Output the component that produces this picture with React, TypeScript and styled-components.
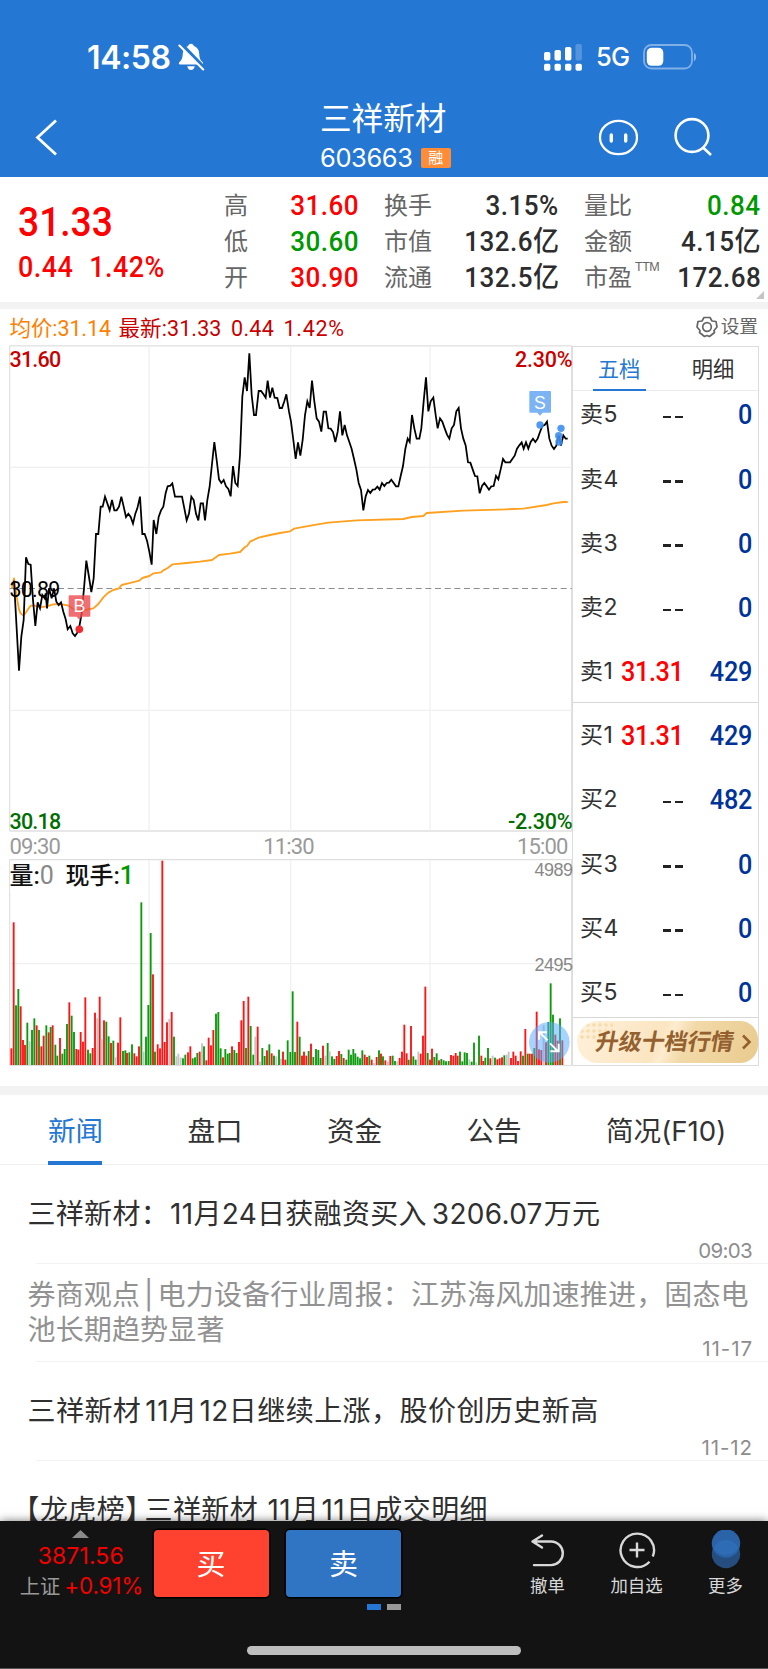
import React from 'react';
import styled, { createGlobalStyle } from 'styled-components';

const ui = `Inter, 'Noto Sans CJK SC', sans-serif`;
const din = `Roboto, 'Noto Sans CJK SC', sans-serif`;

const Global = createGlobalStyle`
  * { box-sizing: border-box; }
  body { margin: 0; background: #fff; font-family: ${ui}; color: #333; }
  svg { display: block; flex: none; }
`;

const Screen = styled.div`
  width: 768px; height: 1669px; overflow: hidden;
  display: flex; flex-direction: column; background: #fff; white-space: nowrap;
`;

/* ---------- header ---------- */
const Header = styled.header`
  height: 177px; flex: none; background: #2577d4; color: #fff;
  display: flex; flex-direction: column;
`;
const StatusBar = styled.div`
  height: 95px; padding: 38px 71px 0 87px; display: flex; justify-content: space-between; align-items: flex-start;
`;
const StatusSide = styled.div<{ $gap: number }>`
  display: flex; align-items: center; height: 38px; gap: ${p => p.$gap}px;
`;
const Clock = styled.span`font-size: 32px; font-weight: 600; line-height: 39px; letter-spacing: -0.4px; width: 84px;`;
const Network = styled.span`font-size: 25.5px; font-weight: 500; line-height: 40px; letter-spacing: -0.7px; width: 33px;`;
const NavBar = styled.div`
  flex: 1; display: grid; grid-template-columns: 320px 1fr auto; padding-right: 56px; align-items: start;
`;
const BackSlot = styled.div`padding: 24px 0 0 35px;`;
const TitleBlock = styled.div`display: flex; flex-direction: column; padding-top: 3px;`;
const Title = styled.h1`margin: 0; font-size: 31.6px; font-weight: 400; line-height: 42px;`;
const CodeLine = styled.div`display: flex; align-items: center; gap: 8px; line-height: 35px; height: 35px; font-size: 25.5px; letter-spacing: -0.4px;`;
const MarginBadge = styled.span`
  width: 30px; height: 20px; line-height: 20px; border-radius: 2px; background: #ff8c37;
  font-size: 15px; letter-spacing: 0; text-align: center;
`;
const NavIcons = styled.div`display: flex; gap: 35px; padding-top: 21px;`;

/* ---------- quote summary ---------- */
const Quote = styled.section`
  position: relative; height: 125px; flex: none; display: flex; padding: 10px 9px 0 18px; font-family: ${din};
`;
const PriceBlock = styled.div`width: 206px; color: #f00; font-weight: 500;`;
const LastPrice = styled.div`
  font-size: 40px; line-height: 44px; margin-top: 14px; letter-spacing: 0; transform: scaleX(0.93); transform-origin: left;
`;
const Change = styled.div`
  font-size: 29px; line-height: 40px; margin-top: 2px; display: flex; gap: 17px; letter-spacing: 0.5px;
  transform: scaleX(0.93); transform-origin: left;
`;
const StatColumns = styled.div`
  display: grid; grid-template-columns: 133px 173px 175px; column-gap: 27px; align-content: start; margin-top: 1px;
`;
const Stat = styled.div`display: flex; justify-content: space-between; height: 36px; line-height: 36px;`;
const StatLabel = styled.span`font-size: 24px; color: #666; display: flex;`;
const Sup = styled.sup`font: 12.5px/12px 'Liberation Sans', sans-serif; margin: 1px 0 0 3px; letter-spacing: -0.5px;`;
const StatValue = styled.span<{ $c?: string }>`
  font-size: 28px; font-weight: 500; letter-spacing: 0.5px; margin-right: -2px; color: ${p => p.$c || '#2d2d2d'};
  transform: scaleX(0.93); transform-origin: right;
`;
const Corner = styled.i`
  position: absolute; right: 4px; bottom: 3px; border: 4.5px solid transparent;
  border-right-color: #c4c4c4; border-bottom-color: #c4c4c4;
`;
const Band = styled.div<{ $h: number }>`height: ${p => p.$h}px; flex: none; background: #f3f3f3;`;

/* ---------- chart ---------- */
const Legend = styled.div`
  height: 36px; flex: none; padding: 3px 10px 0 9.5px; display: flex; align-items: center;
  font: 21.5px/36px ${din}; color: #c80000;
`;
const LegendItem = styled.span<{ $c?: string; $w: number; $ls: number }>`
  width: ${p => p.$w}px; color: ${p => p.$c || 'inherit'}; letter-spacing: ${p => p.$ls}px;
`;
const Settings = styled.span`
  margin-left: auto; display: flex; align-items: center; gap: 3px; font-size: 18.7px; color: #666;
  line-height: 32px; height: 32px; margin-bottom: 3px;
`;
const MarketArea = styled.section`height: 741px; flex: none; display: flex; padding-left: 9px;`;
const Charts = styled.div`width: 562.5px; flex: none;`;
const Plot = styled.div<{ $h: number }>`position: relative; height: ${p => p.$h}px;`;
const Tag = styled.span<{ $x: 'left' | 'right'; $y: number; $c: string; $size?: number; $w?: number }>`
  position: absolute; ${p => p.$x}: ${p => (p.$x === 'left' ? 0.5 : -1)}px; top: ${p => p.$y}px; color: ${p => p.$c};
  font: ${p => p.$w || 500} ${p => p.$size || 21.5}px/22px ${din}; letter-spacing: ${p => (p.$x === 'left' ? -0.8 : -0.2)}px;
`;
const VolumeScale = styled.span<{ $y: number }>`
  position: absolute; right: -1px; top: ${p => p.$y}px; font: 18px/18px 'Liberation Sans', sans-serif; letter-spacing: -0.5px; color: #888;
`;
const TimeAxis = styled.div`
  height: 28px; display: flex; justify-content: space-between; padding: 0 4px 0 0.5px;
  font: 22px/31px ${din}; letter-spacing: -0.85px; color: #999;
`;
const VolumeHead = styled.div`
  position: absolute; left: 0.5px; top: 2px; width: 124px; height: 32px; background: #fff; color: #111;
  font: 500 24px/29px ${din}; display: flex; gap: 11.5px;
`;
const Num = styled.span<{ $c: string; $w?: number }>`color: ${p => p.$c}; font-weight: ${p => p.$w || 400}; font-size: 25px;`;

/* ---------- order book ---------- */
const Book = styled.aside`
  width: 187.5px; height: 720px; margin-top: 1px; border: 1.5px solid #dcdcdc; display: flex; flex-direction: column;
`;
const BookTabs = styled.div`height: 44px; flex: none; display: flex; border-bottom: 1px solid #ececec; padding-left: 20px; gap: 41px;`;
const BookTab = styled.span<{ $on?: boolean }>`
  width: 53px; height: 44px; text-align: center; font-size: 21.3px; line-height: 44px;
  color: ${p => (p.$on ? '#2577d4' : '#333')}; border-bottom: 2px solid ${p => (p.$on ? '#2577d4' : 'transparent')};
`;
const Side = styled.div<{ $h: number; $end?: boolean }>`
  height: ${p => p.$h}px; border-bottom: 1.5px solid #d8d8d8; display: flex; flex-direction: column;
  justify-content: ${p => (p.$end ? 'flex-end' : 'flex-start')};
  & > :last-child { margin-bottom: ${p => (p.$end ? -1.5 : 0)}px; }
`;
const Level = styled.div`
  height: 64.25px; flex: none; display: grid; grid-template-columns: 40.5px 68.5px 1fr; padding: 0 6px 0 7.5px; align-items: center;
`;
const LevelName = styled.span`font-size: 23px; line-height: 28px; letter-spacing: 0.6px;`;
const LevelPrice = styled.span<{ $empty: boolean }>`
  font: 500 28px/28px ${din}; letter-spacing: -0.4px; color: ${p => (p.$empty ? '#111' : '#f00')};
  text-align: ${p => (p.$empty ? 'right' : 'left')}; margin-top: 2px;
  transform: ${p => (p.$empty ? 'none' : 'scaleX(0.9)')}; transform-origin: left;
`;
const Dashes = styled.i`
  display: inline-flex; gap: 4px; margin-right: 6px; vertical-align: 6px;
  &::before, &::after { content: ''; width: 8px; height: 2.5px; background: #222; }
`;
const LevelQty = styled.span`
  font: 500 28px/28px ${din}; letter-spacing: -0.3px; color: #039; text-align: right; margin-top: 2px;
  transform: scaleX(0.9); transform-origin: right;
`;
const Upgrade = styled.div`
  position: relative; margin: 3px 0 0 4px; height: 42px; border-radius: 21px 18px 18px 21px; padding: 0 6px 0 19.5px;
  display: flex; align-items: center; justify-content: space-between; color: #94602f;
  background: linear-gradient(115deg, #fff1da 0%, #fbe5c1 45%, #fdeccf 50%, #f2d9a8 60%, #e9cb8e 100%);
  &::before {
    content: ''; position: absolute; left: 2px; top: 1px; width: 34px; height: 18px; border-radius: 18px 0 0 0;
    background: radial-gradient(circle, #f7dcae 1.4px, transparent 2px) 0 0 / 6px 6px;
  }
`;
const UpgradeText = styled.span`position: relative; font-size: 23px; font-weight: 700; line-height: 44px; transform: skewX(-10deg);`;

/* ---------- news ---------- */
const Tabs = styled.nav`
  height: 70px; flex: none; display: flex; border-bottom: 1px solid #efefef; padding-left: 48px; gap: 84.3px; line-height: 72px; font-size: 27.6px;
`;
const TabItem = styled.span<{ $on?: boolean }>`
  position: relative; min-width: 55px; color: ${p => (p.$on ? '#2577d4' : '#333')};
  &::after { content: ''; position: absolute; left: 0; bottom: -1px; width: 54px; height: 4px; background: ${p => (p.$on ? '#2577d4' : 'transparent')}; }
`;
const NewsList = styled.div`flex: 1; min-height: 0; overflow: hidden;`;
const NewsItem = styled.article<{ $read?: boolean }>`
  height: 98.6px; position: relative; display: flex; flex-direction: column; justify-content: center; padding: 0 0 0 27.5px;
  color: ${p => (p.$read ? '#929292' : '#303030')};
  &::after { content: ''; position: absolute; left: 36px; right: 0; bottom: 0; height: 1px; background: #f2f2f2; }
`;
const Headline = styled.div<{ $ls: number; $shift?: number }>`
  font-size: 28px; line-height: 34.5px; letter-spacing: ${p => p.$ls}px; margin-left: ${p => p.$shift || 0}px;
`;
const Stamp = styled.time<{ $ls?: number }>`
  position: absolute; right: ${p => 16 - (p.$ls || 0)}px; bottom: 1px; font-size: 20.5px; line-height: 24px;
  letter-spacing: ${p => p.$ls ?? -0.7}px; color: #8d8d8d;
`;
const Gap = styled.i<{ $w: number }>`display: inline-block; margin-left: ${p => p.$w}px;`;

/* ---------- bottom bar ---------- */
const Dock = styled.footer`
  position: relative; height: 148px; flex: none; background: #131313; border-bottom: 1px solid #555;
  box-shadow: 0 0 9px rgba(0, 0, 0, 0.55); display: flex; flex-direction: column; align-items: center;
`;
const DockRow = styled.div`width: 100%; height: 124px; display: flex; padding: 9px 25px 0 14px;`;
const IndexBlock = styled.div`
  width: 139.5px; display: flex; flex-direction: column; align-items: center; font-size: 22.5px; line-height: 29px; color: #f30000; letter-spacing: -0.2px;
`;
const IndexChange = styled.div`display: flex; gap: 4px; margin-left: -1px; width: 127px;`;
const IndexName = styled.span`color: #999; font-size: 20.3px; letter-spacing: 0; line-height: 32px;`;
const IndexValue = styled.div`padding-right: 6px; margin-top: 4px; font-size: 23px; letter-spacing: 0.1px;`;
const TradeGroup = styled.div`display: grid; grid-template-columns: 115px 115px; column-gap: 17.5px; align-content: start; justify-items: end;`;
const TradeButton = styled.button<{ $c: string }>`
  width: 115px; height: 67px; border: 0; padding: 0; border-radius: 4px; background: ${p => p.$c}; color: #fff;
  font: 29px/70px ${ui}; box-shadow: 0 0 0 1.5px #000;
`;
const Pager = styled.div`grid-column: 2; display: flex; gap: 5.5px; margin-top: 7px;`;
const PageMark = styled.i<{ $on?: boolean }>`width: 14.5px; height: 6px; background: ${p => (p.$on ? '#2577d4' : '#999')};`;
const Actions = styled.div`margin-left: auto; display: flex; gap: 45px;`;
const Action = styled.div<{ $w: number }>`
  width: ${p => p.$w}px; display: flex; flex-direction: column; align-items: center; font-size: 17.4px; line-height: 24px; color: #d8d8d8; gap: 3px;
`;
const HomeBar = styled.div`width: 274px; height: 9px; border-radius: 5px; background: #bebebe; margin-top: 0.5px;`;

const PRICE = '42,722 57,992 64,890 71,840 78,652 85,672 92,674 99,780 106,858 113,787 120,805 127,765 134,775 137,760 141,805 147,745 155,775 162,745 169,785 176,795 183,787 190,815 197,838 203,868 211,858 218,880 225,888 232,878 238,860 245,820 252,745 259,662 266,705 274,756 281,715 288,582 295,582 302,500 308,500 315,470 322,490 329,511 336,480 343,511 350,511 357,500 364,470 371,500 378,531 385,521 392,531 399,551 406,521 412,505 420,470 427,582 434,582 441,602 448,635 455,674 461,540 469,582 476,531 483,511 490,500 497,459 503,439 511,437 517,430 525,470 546,470 553,505 560,541 567,521 574,470 581,480 588,521 595,541 602,490 609,490 615,541 622,480 629,439 636,372 643,306 650,360 657,418 664,429 671,420 678,439 685,447 692,469 699,378 706,429 713,438 720,345 727,170 734,112 741,153 748,40 755,165 762,225 768,225 776,153 783,153 790,162 797,173 803,122 810,173 817,143 824,173 832,174 839,204 846,204 853,184 859,163 867,215 873,245 880,300 887,357 894,307 901,347 908,300 915,225 922,184 929,204 936,122 943,184 950,235 957,245 964,275 971,215 978,215 985,265 992,266 999,276 1006,306 1013,275 1020,214 1027,286 1034,255 1041,286 1048,306 1055,327 1062,357 1069,388 1076,429 1083,450 1090,511 1097,469 1104,450 1111,459 1118,449 1125,448 1132,440 1139,449 1146,429 1153,438 1160,429 1167,428 1174,419 1181,429 1188,439 1195,439 1202,408 1209,378 1216,327 1223,296 1229,306 1236,225 1243,265 1250,296 1258,296 1264,265 1271,184 1278,112 1285,214 1292,184 1300,173 1307,225 1313,265 1320,235 1327,245 1334,265 1341,284 1348,296 1355,265 1362,255 1369,214 1376,204 1383,265 1390,296 1397,316 1404,367 1411,368 1418,388 1425,408 1432,409 1439,460 1446,438 1453,429 1460,439 1467,449 1474,439 1481,438 1488,408 1495,418 1502,388 1509,357 1516,367 1530,367 1537,357 1544,347 1551,326 1558,316 1565,307 1571,326 1578,307 1585,326 1592,306 1599,296 1606,306 1613,296 1620,276 1627,258 1634,255 1641,245 1648,296 1655,317 1662,327 1669,317 1676,286 1683,317 1690,286 1697,296 1703,296';
const AVERAGE = '36,745 42,715 50,770 57,808 62,820 68,825 75,821 84,808 92,797 105,797 120,802 140,799 160,793 180,792 203,796 225,810 250,811 280,805 295,792 310,772 325,758 340,750 357,745 365,735 385,730 418,722 427,714 448,708 461,700 483,697 490,691 503,684 518,673 560,669 600,665 636,660 657,645 690,641 720,636 735,621 741,618 750,605 776,593 810,585 840,579 870,574 882,566 936,556 985,548 1070,541 1210,537 1235,531 1270,528 1280,519 1390,512 1520,508 1570,506 1640,495 1660,490 1690,486 1703,486';
const VOLUME = '34r715 41r337 48g586 55g537 62r589 69r690 75r705 82g638 89n694 96g660 103g625 110r646 117g660 124r709 131r677 139g646 146r667 152g651 158r646 166g704 172g737 180r684 187g731 194g717 201g642 208r577 215g617 222g666 229r717 235r719 242r666 249r695 256r562 264g719 271g730 278r714 285r608 292n625 299r560 305n688 312r631 319g635 326g679 333r699 340g692 347n742 354r698 361r622 369g723 376g721 381r729 388g727 396g703 403r730 410r739 417r709 424g277 431n725 438g680 445g585 452g369 459r493 465g725 473r703 480r715 487r152 494r696 501r637 508n627 515r606 522g680 529n739 535n731 542n742 549g745 556g734 564r727 571r709 578g745 585g742 592g729 599r725 606n700 612g709 619r751 626r683 633r706 640r660 648g611 655g606 662g715 669r742 676g717 683g731 689g729 696r709 703g720 710g729 717r696 724r631 731r573 738g714 745r560 752g648 760g734 766n680 773r650 780n755 787g714 794g738 801r721 808g703 815r730 822g737 829n739 837g719 843n746 849r725 856r749 863g691 871g726 878g544 885g726 892r635 899g680 906r737 912r725 919r737 926g723 933r701 940g741 948g717 955g720 962g744 969r707 976n737 983g699 989n724 996g739 1003g747 1010r738 1017r723 1024g732 1031r744 1039g749 1046g719 1053g734 1060g717 1066g730 1073g740 1080g745 1087g721 1094r734 1101r741 1108g737 1115r749 1122n759 1130r741 1137g721 1143r731 1149g739 1156r751 1164n755 1171r738 1178g737 1185g753 1192n754 1199r744 1206r725 1213r644 1220r730 1226g749 1233r648 1240g739 1247g749 1255n725 1262r731 1269r677 1276r530 1283g729 1290r749 1296r716 1303g741 1310g730 1317r751 1324g747 1331g751 1338g754 1346g753 1353r735 1360r737 1367r729 1373r737 1380g725 1387g754 1394g727 1401g729 1408n748 1415g755 1422g698 1429n757 1437g677 1444r737 1450r753 1456g743 1464g714 1471r745 1478n737 1485g743 1492r748 1499r745 1506r742 1513g736 1520n734 1526n725 1533r744 1540r725 1547r737 1554r753 1562r724 1569g737 1576r657 1583g731 1589r731 1596r731 1603g714 1610r605 1617r718 1624r720 1631n646 1638r697 1645g636 1652g520 1659g614 1666r674 1673r692 1680g625 1687r691';
const BAR_COLORS: Record<string, string> = { r: '#ff1414', g: '#0d9b0d', n: '#c4c4c4' };

const STATS: [string, string, string?][] = [
  ['高', '31.60', '#f00'], ['换手', '3.15%'], ['量比', '0.84', '#009800'],
  ['低', '30.60', '#009800'], ['市值', '132.6亿'], ['金额', '4.15亿'],
  ['开', '30.90', '#f00'], ['流通', '132.5亿'], ['市盈', '172.68'],
];
const ASKS = [['卖5', '', '0'], ['卖4', '', '0'], ['卖3', '', '0'], ['卖2', '', '0'], ['卖1', '31.31', '429']];
const BIDS = [['买1', '31.31', '429'], ['买2', '', '482'], ['买3', '', '0'], ['买4', '', '0'], ['买5', '', '0']];

function SilentBell() {
  return (
    <svg width="27" height="28" viewBox="0 0 27 28">
      <path d="M13 .8c1.500 0 2.600.9 2.800 2.300 3.200 1 5.200 3.800 5.400 7.300.3 4.800 1.100 6.500 3.300 8.500.9.8 1 2.600-.6 2.600H2.100c-1.600 0-1.500-1.800-.6-2.600 2.200-2 3-3.700 3.300-8.500.2-3.500 2.200-6.300 5.400-7.300C10.400 1.700 11.500.8 13 .8zM9.300 23.300h7.400c-.3 2.200-1.800 3.700-3.700 3.700s-3.400-1.500-3.700-3.700z" fill="#fff" />
      <path d="M2.500.8 26.500 25.600" stroke="#2577d4" strokeWidth="4.400" />
      <path d="M1.400 2.500 25.200 26.500" stroke="#fff" strokeWidth="2.100" strokeLinecap="round" />
    </svg>
  );
}

function Signal() {
  return (
    <svg width="38" height="28" viewBox="0 0 38 28" fill="#fff">
      {[9, 7, 4, 1].map((y, i) => (
        <g key={i}>
          <rect x={i * 10.5} y={y} width="6.400" height={17.5 - y} rx="1.800" opacity={i === 3 ? 0.22 : 1} />
          <rect x={i * 10.5} y="20.700" width="6.400" height="7" rx="1.800" />
        </g>
      ))}
    </svg>
  );
}

function Battery() {
  return (
    <svg width="54" height="26" viewBox="0 0 54 26">
      <rect x="1" y="1" width="48" height="23.500" rx="7.500" fill="none" stroke="#fff" strokeOpacity=".42" strokeWidth="1.800" />
      <rect x="3.800" y="3.800" width="16.500" height="18" rx="4.800" fill="#fff" />
      <path d="M51 9c2.700.6 2.700 7.400 0 8z" fill="#fff" fillOpacity=".5" />
    </svg>
  );
}

function PriceChart() {
  return (
    <svg width="563.500" height="487" viewBox="27 15 1690.500 1461" fill="none">
      <path d="M29 17.500H1715M29 1473H1715" stroke="#dfdfdf" strokeWidth="4" />
      <path d="M29 17V1473M1715 17V1473" stroke="#dfdfdf" strokeWidth="3.500" />
      <path d="M447 19V1472M872 19V1472M1290 19V1472M29 382H1715M29 1111H1715" stroke="#f0f0f0" strokeWidth="4" />
      <path d="M29 745.500H1715" stroke="#8c8c8c" strokeWidth="3.500" strokeDasharray="18 11" />
      <polyline points={AVERAGE} stroke="#ffa01e" strokeWidth="5.500" strokeLinejoin="round" />
      <polyline points={PRICE} stroke="#000" strokeWidth="5.300" />
      <path d="M209 766h59a3 3 0 0 1 3 3v58a3 3 0 0 1-3 3h-22l-8 9-8-9h-21a3 3 0 0 1-3-3v-58a3 3 0 0 1 3-3z" fill="#ee4b4f" fillOpacity=".8" />
      <text x="238.500" y="817" fill="#fff" fontFamily="Liberation Sans" fontSize="53" textAnchor="middle">B</text>
      <circle cx="238" cy="868" r="11.500" fill="#f02c30" />
      <path d="M1591 153h59a3 3 0 0 1 3 3v59a3 3 0 0 1-3 3h-22l-8 9-8-9h-21a3 3 0 0 1-3-3v-59a3 3 0 0 1 3-3z" fill="#69a8f3" fillOpacity=".88" />
      <text x="1620" y="206" fill="#fff" fontFamily="Liberation Sans" fontSize="53" textAnchor="middle">S</text>
      <g fill="#3f8ff0" fillOpacity=".9">
        <circle cx="1620" cy="255" r="11" /><circle cx="1683" cy="265" r="11" />
        <circle cx="1676" cy="287" r="11" /><circle cx="1677" cy="306" r="11" />
      </g>
    </svg>
  );
}

function VolumeChart() {
  return (
    <svg width="563.500" height="207" viewBox="27 147 1690.500 621">
      <path d="M29 149H1715M29 766.500H1715" stroke="#dfdfdf" strokeWidth="3.500" />
      <path d="M29 149V766M1715 149V766" stroke="#dfdfdf" strokeWidth="3.500" />
      <path d="M447 151V764M872 151V764M1290 151V764M29 461H1715" stroke="#f0f0f0" strokeWidth="4" />
      {VOLUME.split(' ').map(v => {
        const m = /(\d+)(\w)(\d+)/.exec(v)!;
        return <rect key={v} x={+m[1] - 2.8} y={+m[3]} width="5.600" height={765 - +m[3]} fill={BAR_COLORS[m[2]]} />;
      })}
      <circle cx="1648" cy="697" r="61" fill="#58a9ff" fillOpacity=".52" />
      <path d="M1643 691l-24-24M1617 689v-22h24M1650 700l24 24M1676 701v23h-25" stroke="#fff" strokeWidth="6" fill="none" />
    </svg>
  );
}

function Levels({ rows }: { rows: string[][] }) {
  return (
    <>
      {rows.map(([name, price, qty]) => (
        <Level key={name}>
          <LevelName>{name}</LevelName>
          <LevelPrice $empty={!price}>{price || <Dashes />}</LevelPrice>
          <LevelQty>{qty}</LevelQty>
        </Level>
      ))}
    </>
  );
}

export default function App() {
  return (
    <Screen>
      <Global />
      <Header>
        <StatusBar>
          <StatusSide $gap={7}><Clock>14:58</Clock><SilentBell /></StatusSide>
          <StatusSide $gap={14}><Signal /><Network>5G</Network><Battery /></StatusSide>
        </StatusBar>
        <NavBar>
          <BackSlot>
            <svg width="24" height="37" viewBox="0 0 24 37"><path d="M21 1.500 2.500 18.500 21 35.500" fill="none" stroke="#fff" strokeWidth="2.800" /></svg>
          </BackSlot>
          <TitleBlock>
            <Title>三祥新材</Title>
            <CodeLine>603663<MarginBadge>融</MarginBadge></CodeLine>
          </TitleBlock>
          <NavIcons>
            <svg width="40" height="42" viewBox="0 0 40 42" fill="none" stroke="#fff">
              <ellipse cx="20.500" cy="21.500" rx="18.500" ry="16.700" strokeWidth="2.300" />
              <path d="M13.300 19v6M27.700 19v6" strokeWidth="3.400" strokeLinecap="round" />
            </svg>
            <svg width="39" height="42" viewBox="0 0 39 42" fill="none" stroke="#fff" strokeWidth="2.600">
              <circle cx="19" cy="19.500" r="16.400" /><path d="M30 31.500 38 39" />
            </svg>
          </NavIcons>
        </NavBar>
      </Header>

      <Quote>
        <PriceBlock>
          <LastPrice>31.33</LastPrice>
          <Change><span>0.44</span><span>1.42%</span></Change>
        </PriceBlock>
        <StatColumns>
          {STATS.map(([label, value, color]) => (
            <Stat key={label}>
              <StatLabel>{label}{label === '市盈' && <Sup>TTM</Sup>}</StatLabel>
              <StatValue $c={color}>{value}</StatValue>
            </Stat>
          ))}
        </StatColumns>
        <Corner />
      </Quote>
      <Band $h={7} />

      <Legend>
        <LegendItem $w={109} $ls={-0.1} $c="#ff8000">均价:31.14</LegendItem>
        <LegendItem $w={112.5} $ls={0.1}>最新:31.33</LegendItem>
        <LegendItem $w={52.5} $ls={0.3}>0.44</LegendItem>
        <LegendItem $w={70} $ls={0.7}>1.42%</LegendItem>
        <Settings>
          <svg width="22" height="22" viewBox="0 0 22 22" fill="none" stroke="#666" strokeWidth="1.700">
            <path d="M8 1.500h6l2 3.500 4 .5 1 5.500-3 3.500.5 2-5 4-2.500-1-2.500 1-5-4 .5-2L1 11l1-5.500 4-.5z" strokeLinejoin="round" />
            <circle cx="11" cy="11" r="4.300" />
          </svg>
          设置
        </Settings>
      </Legend>

      <MarketArea>
        <Charts>
          <Plot $h={486}>
            <Tag $x="left" $y={234} $c="#000" $w={400} $size={21.5}>30.89</Tag>
            <PriceChart />
            <Tag $x="left" $y={3.5} $c="#c80000">31.60</Tag>
            <Tag $x="right" $y={3.5} $c="#c80000">2.30%</Tag>
            <Tag $x="left" $y={466} $c="#006e00">30.18</Tag>
            <Tag $x="right" $y={466} $c="#006e00">-2.30%</Tag>
          </Plot>
          <TimeAxis><span>09:30</span><span>11:30</span><span>15:00</span></TimeAxis>
          <Plot $h={207}>
            <VolumeChart />
            <VolumeHead>
              <span>量:<Num $c="#888">0</Num></span>
              <span>现手:<Num $c="#009800" $w={500}>1</Num></span>
            </VolumeHead>
            <VolumeScale $y={2}>4989</VolumeScale>
            <VolumeScale $y={96.5}>2495</VolumeScale>
          </Plot>
        </Charts>
        <Book>
          <BookTabs><BookTab $on>五档</BookTab><BookTab>明细</BookTab></BookTabs>
          <Side $h={312} $end><Levels rows={ASKS} /></Side>
          <Side $h={315}><Levels rows={BIDS} /></Side>
          <Upgrade>
            <UpgradeText>升级十档行情</UpgradeText>
            <svg width="11" height="16" viewBox="0 0 11 16"><path d="M2 1.500 8.500 8 2 14.500" fill="none" stroke="#94602f" strokeWidth="2.600" /></svg>
          </Upgrade>
        </Book>
      </MarketArea>
      <Band $h={9} />

      <Tabs>
        <TabItem $on>新闻</TabItem><TabItem>盘口</TabItem><TabItem>资金</TabItem><TabItem>公告</TabItem><TabItem>简况(F10)</TabItem>
      </Tabs>
      <NewsList>
        <NewsItem>
          <Headline $ls={0.3}>三祥新材：<Gap $w={1} />11月24日获融资买入<Gap $w={5} />3206.07<Gap $w={1} />万元</Headline>
          <Stamp>09:03</Stamp>
        </NewsItem>
        <NewsItem $read>
          <Headline $ls={0.15}>券商观点<Gap $w={4} />|<Gap $w={4} />电力设备行业周报：江苏海风加速推进，固态电<br />池长期趋势显著</Headline>
          <Stamp $ls={0.9}>11-17</Stamp>
        </NewsItem>
        <NewsItem>
          <Headline $ls={0.45}>三祥新材<Gap $w={4} />11月<Gap $w={2} />12日继续上涨，股价创历史新高</Headline>
          <Stamp $ls={0.9}>11-12</Stamp>
        </NewsItem>
        <NewsItem>
          <Headline $ls={0.4} $shift={-16}>【龙虎榜】<Gap $w={-9} />三祥新材 <Gap $w={1} />11月<Gap $w={2} />11<Gap $w={1} />日成交明细</Headline>
        </NewsItem>
      </NewsList>

      <Dock>
        <DockRow>
          <IndexBlock>
            <svg width="146" height="8" viewBox="0 0 146 8"><path d="M61 8 69.500 0 78 8z" fill="#8a8a8a" /></svg>
            <IndexValue>3871.56</IndexValue>
            <IndexChange><IndexName>上证</IndexName>+0.91%</IndexChange>
          </IndexBlock>
          <TradeGroup>
            <TradeButton $c="#ff4130">买</TradeButton>
            <TradeButton $c="#3075c4">卖</TradeButton>
            <Pager><PageMark $on /><PageMark /></Pager>
          </TradeGroup>
          <Actions>
            <Action $w={35}>
              <svg width="35" height="41" viewBox="0 0 35 41" fill="none" stroke="#d8d8d8" strokeWidth="2.400" strokeLinecap="round" strokeLinejoin="round">
                <path d="M12 5.500 2.500 11.500 12 17.500M2.500 11.500H21a11.800 11.800 0 0 1 0 23.600H4" />
              </svg>
              撤单
            </Action>
            <Action $w={53}>
              <svg width="40" height="41" viewBox="0 0 40 41" fill="none" stroke="#d8d8d8" strokeWidth="2.400">
                <path d="M35.800 26.500A16.700 16.700 0 1 0 32.500 31.700M20 12.500v15M12.500 20h15" />
              </svg>
              加自选
            </Action>
            <Action $w={35}>
              <svg width="30" height="41" viewBox="0 0 30 41">
                <circle cx="15" cy="24" r="14.200" fill="#254e7e" /><circle cx="15" cy="13.500" r="14.200" fill="#2a63a8" />
                <path d="M2.500 17.500a14.200 14.200 0 0 1 25 0 14.200 14.200 0 0 1-25 0z" fill="#2e6cb5" />
              </svg>
              更多
            </Action>
          </Actions>
        </DockRow>
        <HomeBar />
      </Dock>
    </Screen>
  );
}
